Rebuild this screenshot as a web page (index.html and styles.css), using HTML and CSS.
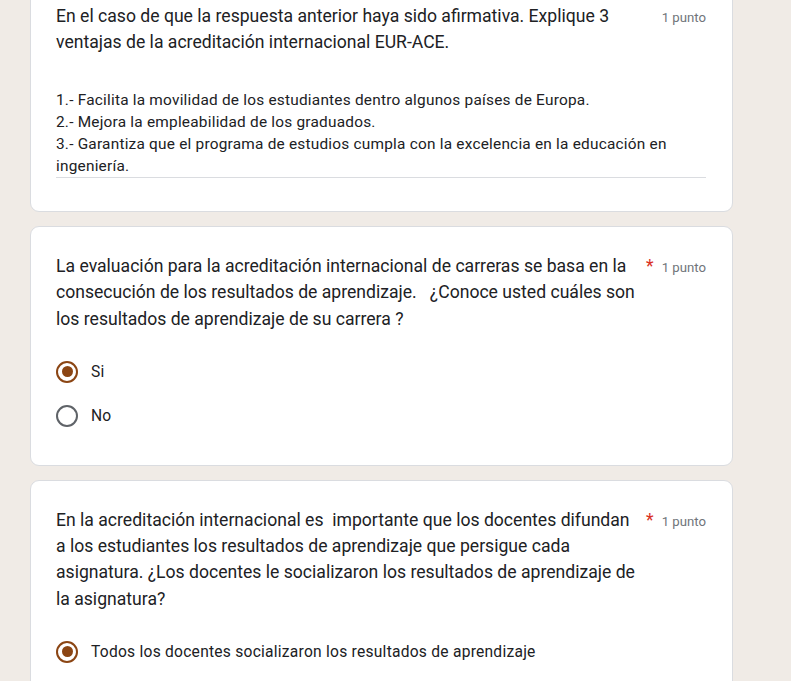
FILE: index.html
```html
<!DOCTYPE html>
<html lang="es">
<head>
<meta charset="utf-8">
<title>Formulario</title>
<link rel="stylesheet" href="styles.css">
</head>
<body>
<main class="list">
  <section class="card">
    <div class="q-head">
      <div class="q-title">En el caso de que la respuesta anterior haya sido afirmativa. Explique 3 ventajas de la acreditación internacional EUR-ACE.</div>
      <div class="q-meta"><span class="points">1 punto</span></div>
    </div>
    <div class="long-answer">1.- Facilita la movilidad de los estudiantes dentro algunos países de Europa.<br>2.- Mejora la empleabilidad de los graduados.<br>3.- Garantiza que el programa de estudios cumpla con la excelencia en la educación en ingeniería.</div>
  </section>

  <section class="card card-choice">
    <div class="q-head">
      <div class="q-title">La evaluación para la acreditación internacional de carreras se basa en la consecución de los resultados de aprendizaje. &nbsp; ¿Conoce usted cuáles son los resultados de aprendizaje de su carrera ?</div>
      <div class="q-meta"><span class="req">*</span><span class="points">1 punto</span></div>
    </div>
    <div class="options">
      <div class="option"><span class="radio checked"></span><span class="opt-label">Si</span></div>
      <div class="option"><span class="radio"></span><span class="opt-label">No</span></div>
    </div>
  </section>

  <section class="card card-choice">
    <div class="q-head">
      <div class="q-title">En la acreditación internacional es &nbsp;importante que los docentes difundan a los estudiantes los resultados de aprendizaje que persigue cada asignatura. ¿Los docentes le socializaron los resultados de aprendizaje de la asignatura?</div>
      <div class="q-meta"><span class="req">*</span><span class="points">1 punto</span></div>
    </div>
    <div class="options">
      <div class="option"><span class="radio checked"></span><span class="opt-label">Todos los docentes socializaron los resultados de aprendizaje</span></div>
    </div>
  </section>
</main>
</body>
</html>
```
FILE: styles.css
```css
html, body {
  margin: 0;
  padding: 0;
  background: #f0ebe6;
  height: 100%;
  overflow: hidden;
}
body {
  font-family: Roboto, "Liberation Sans", Arial, sans-serif;
  color: #202124;
}
.list {
  margin: -24px 0 0 30px;
  width: 703px;
  display: flex;
  flex-direction: column;
  gap: 14px;
}
.card {
  background: #fff;
  border: 1px solid #dadce0;
  border-radius: 9px;
  padding: 26px 26px 26px 25px;
}
.card-choice {
  padding-bottom: 27px;
}
.q-head {
  display: flex;
  align-items: baseline;
}
.q-title {
  flex: 1;
  font-size: 17.6px;
  line-height: 26.4px;
  letter-spacing: 0;
  padding-right: 4px;
}
.q-meta {
  width: 67px;
  display: flex;
  justify-content: flex-end;
  align-items: baseline;
  white-space: nowrap;
}
.req {
  color: #d93025;
  font-size: 17.6px;
  margin-right: 8px;
}
.points {
  color: #70757a;
  font-size: 13.2px;
}
.long-answer {
  margin-top: 33px;
  font-size: 15.4px;
  line-height: 22px;
  letter-spacing: 0.22px;
  border-bottom: 1px solid #dadce0;
  margin-bottom: 7px;
}
.options {
  margin-top: 17.6px;
  display: flex;
  flex-direction: column;
}
.option {
  height: 44px;
  display: flex;
  align-items: center;
  gap: 13px;
}
.radio {
  width: 22px;
  height: 22px;
  box-sizing: border-box;
  border: 2.2px solid #5f6368;
  border-radius: 50%;
  display: flex;
  align-items: center;
  justify-content: center;
  flex: none;
}
.radio.checked {
  border-color: #8b4513;
}
.radio.checked::after {
  content: "";
  width: 11px;
  height: 11px;
  border-radius: 50%;
  background: #8b4513;
}
.opt-label {
  font-size: 15.6px;
  letter-spacing: 0.24px;
  color: #202124;
}
```
